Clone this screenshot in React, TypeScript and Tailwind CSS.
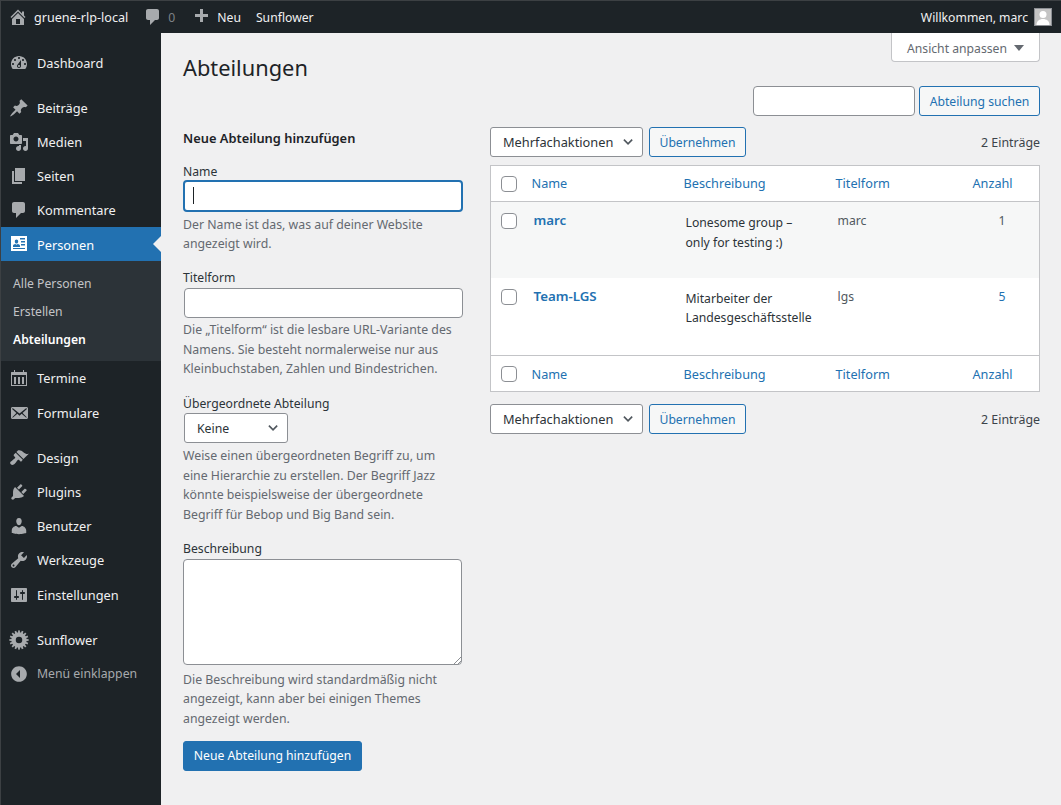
import React from "react";

const font = "font-['Noto_Sans','Open_Sans',sans-serif]";

const icons: Record<string, string> = {
    home: "M16 8.5l1.53 1.53-1.06 1.06L10 4.62l-6.47 6.47-1.06-1.06L10 2.5l4 4v-2h2v4zm-6-2.46l6 5.99V18H4v-5.97zM12 17v-5H8v5h4z",
    comment: "M5 2h9c1.1 0 2 .9 2 2v7c0 1.1-.9 2-2 2h-2l-5 5v-5H5c-1.1 0-2-.9-2-2V4c0-1.1.9-2 2-2z",
    plus: "M17 7v3h-5v5H9v-5H4V7h5V2h3v5h5z",
    dashboard: "M3.76 16h12.48c1.1-1.37 1.76-3.11 1.76-5 0-4.42-3.58-8-8-8s-8 3.58-8 8c0 1.89.66 3.63 1.76 5zM10 4c.55 0 1 .45 1 1s-.45 1-1 1-1-.45-1-1 .45-1 1-1zM6 6c.55 0 1 .45 1 1s-.45 1-1 1-1-.45-1-1 .45-1 1-1zm8 0c.55 0 1 .45 1 1s-.45 1-1 1-1-.45-1-1 .45-1 1-1zm-5.37 5.55L12 7v6c0 1.1-.9 2-2 2s-2-.9-2-2c0-.57.24-1.08.63-1.45zM4 10c.55 0 1 .45 1 1s-.45 1-1 1-1-.45-1-1 .45-1 1-1zm12 0c.55 0 1 .45 1 1s-.45 1-1 1-1-.45-1-1 .45-1 1-1zm-5 3c0-.55-.45-1-1-1s-1 .45-1 1 .45 1 1 1 1-.45 1-1z",
    post: "M10.44 3.02l1.82-1.82 6.36 6.35-1.83 1.82c-1.05-.68-2.48-.57-3.41.36l-.75.75c-.92.93-1.04 2.35-.35 3.41l-1.83 1.82-2.41-2.41-2.8 2.79c-.42.42-3.38 2.71-3.8 2.29s1.86-3.39 2.28-3.81l2.79-2.79L4.1 9.36l1.83-1.82c1.05.69 2.48.57 3.4-.36l.75-.75c.93-.92 1.05-2.35.36-3.41z",
    media: "M13 11V4c0-.55-.45-1-1-1h-1.67L9 1H5L3.67 3H2c-.55 0-1 .45-1 1v7c0 .55.45 1 1 1h10c.55 0 1-.45 1-1zM7 4.5c1.38 0 2.5 1.12 2.5 2.5S8.38 9.5 7 9.5 4.5 8.38 4.5 7 5.62 4.5 7 4.5zM14 6h5v10.5c0 1.38-1.12 2.5-2.5 2.5S14 17.88 14 16.5s1.12-2.5 2.5-2.5c.17 0 .34.02.5.05V9h-3V6zm-4 8.05V13h2v3.5c0 1.38-1.12 2.5-2.5 2.5S7 17.88 7 16.5 8.12 14 9.5 14c.17 0 .34.02.5.05z",
    page: "M6 15V2h10v13H6zm-1 1h8v2H3V5h2v11z",
    personen: "M2 2h16v15H2V2zm5.5 3.6c-1 0-1.7.8-1.7 1.8S6.5 9.5 7.5 9.5 9.2 8.4 9.2 7.4 8.5 5.6 7.5 5.6zM4 13h7v-1.2c0-.9-1.2-1.9-2.3-1.9l-1.2.9-1.2-.9C5.2 9.9 4 10.9 4 11.8V13zm7-9v1.5h5V4h-5zm1 3v1.5h4V7h-4zm0 3v1.5h4V10h-4zM4 14v1h12v-1H4z",
    calendar: "M15 4h2.5c.3 0 .5.2.5.5V18H2V4.5c0-.3.2-.5.5-.5H5V2h1v2h8V2h1v2zM3 7v10h14V7H3zm2 2h2v7H5V9zm4 0h2v7H9V9zm4 0h2v7h-2V9z",
    mail: "M19 14.5v-9c0-.83-.67-1.5-1.5-1.5H3.49c-.83 0-1.5.67-1.5 1.5v9c0 .83.67 1.5 1.5 1.5H17.5c.83 0 1.5-.67 1.5-1.5zm-1.31-9.11c.33.33.15.67-.03.84L13.6 9.95l3.9 4.06c.12.14.2.36.06.51-.13.16-.43.15-.56.05l-4.37-3.73-2.14 1.95-2.13-1.95-4.37 3.73c-.13.1-.43.11-.56-.05-.14-.15-.06-.37.06-.51l3.9-4.06-4.06-3.72c-.18-.17-.36-.51-.03-.84s.67-.17.95.07l6.24 5.04 6.25-5.04c.28-.24.62-.4.95-.07z",
    design: "M14.48 11.06L7.41 3.99l1.5-1.5c.5-.56 2.3-.47 3.51.32 1.21.8 1.43 1.28 2.91 2.1 1.18.64 2.45 1.26 4.45.85zm-.71.71L6.7 4.7 4.93 6.47c-.39.39-.39 1.02 0 1.41l1.06 1.06c.39.39.39 1.03 0 1.42-.6.6-1.43 1.11-2.21 1.69-.35.26-.7.53-1.01.84C1.43 13.23.4 14.89 1.8 16.3c1.4 1.4 3.07.37 4.41-.97.31-.31.58-.67.84-1.01.58-.78 1.09-1.61 1.69-2.21.39-.39 1.03-.39 1.42 0l1.06 1.06c.39.39 1.02.39 1.41 0z",
    plugin: "M13.11 4.36L9.87 7.6 8 5.73l3.24-3.24c.35-.34 1.05-.2 1.56.32.52.51.66 1.21.31 1.55zm-8 1.77l.91-1.12 9.01 9.01-1.19.84c-.71.71-2.63 1.16-3.82 1.16H6.14L4.9 17.26c-.59.59-1.54.59-2.12 0-.59-.58-.59-1.53 0-2.12l1.24-1.24v-3.88c0-1.13.4-3.19 1.09-3.89zm7.26 3.97l3.24-3.24c.34-.35 1.04-.21 1.55.31.52.51.66 1.21.31 1.55l-3.24 3.25z",
    users: "M10 9.25c-2.27 0-2.73-3.44-2.73-3.44C7 4.02 7.82 2 9.97 2c2.16 0 2.98 2.02 2.71 3.81 0 0-.41 3.44-2.68 3.44zm0 2.57L12.72 10c2.39 0 4.52 2.33 4.52 4.53v2.49s-3.65 1.13-7.24 1.13c-3.65 0-7.24-1.13-7.24-1.13v-2.49c0-2.25 1.94-4.48 4.47-4.48z",
    tools: "M16.68 9.77c-1.34 1.34-3.3 1.67-4.95.99l-5.41 6.52c-.99.99-2.59.99-3.58 0s-.99-2.59 0-3.57l6.52-5.42c-.68-1.65-.35-3.61.99-4.95 1.28-1.28 3.12-1.62 4.72-1.06l-2.89 2.89 2.82 2.82 2.86-2.87c.53 1.58.18 3.39-1.08 4.65zM3.81 16.21c.4.39 1.04.39 1.43 0 .4-.4.4-1.04 0-1.43-.39-.4-1.03-.4-1.43 0-.39.39-.39 1.03 0 1.43z",
    settings: "M18 16V4c0-.55-.45-1-1-1H3c-.55 0-1 .45-1 1v12c0 .55.45 1 1 1h14c.55 0 1-.45 1-1zM8 11h1c.55 0 1 .45 1 1s-.45 1-1 1H8v1.5c0 .28-.22.5-.5.5s-.5-.22-.5-.5V13H6c-.55 0-1-.45-1-1s.45-1 1-1h1V5.5c0-.28.22-.5.5-.5s.5.22.5.5V11zm5-2h-1c-.55 0-1-.45-1-1s.45-1 1-1h1V5.5c0-.28.22-.5.5-.5s.5.22.5.5V7h1c.55 0 1 .45 1 1s-.45 1-1 1h-1v5.5c0 .28-.22.5-.5.5s-.5-.22-.5-.5V9z",
    collapse: "M10 2.16c4.33 0 7.84 3.51 7.84 7.84s-3.51 7.84-7.84 7.84S2.16 14.33 2.16 10C2.17 5.67 5.67 2.16 10 2.16zM11 6v8L7 10z",
};

const Icon = ({ name, className }: { name: string; className: string }) => (
    <svg viewBox="0 0 20 20" fill="currentColor" fillRule="evenodd" className={className}>
        <path d={icons[name]} />
    </svg>
);

const SunIcon = () => (
    <svg viewBox="0 0 20 20" fill="currentColor" className="w-5 h-5 text-[#a7aaad]">
        <circle cx="10" cy="10" r="5.5" fill="none" stroke="currentColor" strokeWidth="4.5" />
        {Array.from({ length: 16 }).map((_, i) => (
            <rect key={i} x="9.1" y="0.4" width="1.8" height="3" transform={`rotate(${i * 22.5} 10 10)`} />
        ))}
    </svg>
);

const MenuItem = ({ icon, label, h = "h-[34px]", mt = "" }: { icon: string; label: string; h?: string; mt?: string }) => (
    <div className={`flex items-center ${h} ${mt} text-[#f0f0f1] text-[12.8px]`}>
        <span className="w-[36px] pl-[8px] flex items-center shrink-0">
            <Icon name={icon} className="w-5 h-5 text-[#a7aaad]" />
        </span>
        <span className="pt-[2px]">{label}</span>
    </div>
);

const SmallBtn = ({ label, className = "" }: { label: string; className?: string }) => (
    <button className={`h-[30px] pt-[2px] rounded-[3px] border border-[#2271b1] bg-[#f6f7f7] text-[#2271b1] text-[12.2px] ${className}`}>
        {label}
    </button>
);

const Chevron = () => (
    <svg viewBox="0 0 12 8" className="w-[11px] h-[8px]" fill="none" stroke="#50575e" strokeWidth="1.8">
        <path d="M1 1.5l4.5 4.5 4.5-4.5" />
    </svg>
);

const BulkActions = ({ className = "" }: { className?: string }) => (
    <div className={`flex items-center justify-between ${className}`}>
        <div className="flex items-center gap-[6px]">
            <div className="w-[153px] h-[30px] bg-white border border-[#8c8f94] rounded-[3px] flex items-center justify-between pl-[12px] pr-[8px] text-[#2c3338] text-[12.8px]">
                <span className="pt-[2px]">Mehrfachaktionen</span>
                <Chevron />
            </div>
            <SmallBtn label="Übernehmen" className="w-[97px]" />
        </div>
        <span className="pt-[2px] text-[#3c434a] text-[12.4px]">2 Einträge</span>
    </div>
);

const Checkbox = () => (
    <span className="block w-4 h-4 bg-white border border-[#8c8f94] rounded-[4px]" />
);

const HeadRow = ({ top }: { top?: boolean }) => {
    const cell = `pl-[8px] ${top ? "pt-px" : "pt-[2px]"}`;
    return (
        <tr className={`h-[36px] text-[#2271b1] text-[12.7px] ${top ? "border-b" : "border-t"} border-[#c3c4c7]`}>
            <td className="pl-[10px]"><Checkbox /></td>
            <td className={cell}>Name</td>
            <td className={cell}>Beschreibung</td>
            <td className={cell}>Titelform</td>
            <td className={cell}>Anzahl</td>
        </tr>
    );
};

const Row = ({ name, desc, slug, count, h, shaded, countLink }: { name: string; desc: string[]; slug: string; count: string; h: string; shaded?: boolean; countLink?: boolean }) => (
    <tr className={`${h} align-top text-[12.2px] ${shaded ? "bg-[#f6f7f7]" : "bg-white"}`}>
        <td className="pl-[10px] pt-[11px]"><Checkbox /></td>
        <td className="pl-[10px] pt-[9px] font-semibold text-[#2271b1] text-[13.3px]">{name}</td>
        <td className="pl-[10px] pt-[11px] text-[#2c3338] leading-[19.5px]">
            {desc.map((d) => (
                <div key={d}>{d}</div>
            ))}
        </td>
        <td className="pl-[10px] pt-[10px] text-[#50575e]">{slug}</td>
        <td className={`pt-[10px] pl-[34px] ${countLink ? "text-[#2271b1]" : "text-[#50575e]"}`}>{count}</td>
    </tr>
);

const Help = ({ lines, className = "" }: { lines: string[]; className?: string }) => (
    <div className={`text-[#646970] text-[12.3px] leading-[19.5px] whitespace-nowrap ${className}`}>
        {lines.map((l) => (
            <div key={l}>{l}</div>
        ))}
    </div>
);

const Label = ({ children, className = "" }: { children: React.ReactNode; className?: string }) => (
    <div className={`text-[#2c3338] text-[12.2px] leading-[19.5px] ${className}`}>{children}</div>
);

const AddForm = () => (
    <div className="w-[280px] flex flex-col">
        <h2 className="text-[#1d2327] text-[12.85px] font-semibold leading-[20px] mt-px">Neue Abteilung hinzufügen</h2>
        <Label className="mt-[14px]">Name</Label>
        <div className="-mt-[2px] w-[280px] h-[32px] bg-white border-2 border-[#2271b1] rounded-[4px] flex items-center pl-[8px]">
            <span className="block w-px h-[17px] bg-[#1d2327]" />
        </div>
        <Help className="mt-[3px]" lines={["Der Name ist das, was auf deiner Website", "angezeigt wird."]} />
        <Label className="mt-[14px]">Titelform</Label>
        <div className="ml-px mt-px w-[279px] h-[30px] bg-white border border-[#8c8f94] rounded-[4px]" />
        <Help className="mt-[2px]" lines={["Die „Titelform“ ist die lesbare URL-Variante des", "Namens. Sie besteht normalerweise nur aus", "Kleinbuchstaben, Zahlen und Bindestrichen."]} />
        <Label className="mt-[15px]">Übergeordnete Abteilung</Label>
        <div className="ml-px w-[104px] h-[30px] bg-white border border-[#8c8f94] rounded-[3px] flex items-center justify-between pl-[12px] pr-[8px] text-[#2c3338] text-[12.3px]">
            <span className="pt-[2px]">Keine</span>
            <Chevron />
        </div>
        <Help className="mt-[3px]" lines={["Weise einen übergeordneten Begriff zu, um", "eine Hierarchie zu erstellen. Der Begriff Jazz", "könnte beispielsweise der übergeordnete", "Begriff für Bebop und Big Band sein."]} />
        <Label className="mt-[15px]">Beschreibung</Label>
        <div className="relative mt-[0.5px] w-[279px] h-[106px] bg-white border border-[#8c8f94] rounded-[4px]">
            <svg viewBox="0 0 8 8" className="absolute right-0 bottom-0 w-2 h-2" stroke="#8c8f94" strokeWidth="1">
                <path d="M1 8l7-7M5 8l3-3" />
            </svg>
        </div>
        <Help className="mt-[4.5px]" lines={["Die Beschreibung wird standardmäßig nicht", "angezeigt, kann aber bei einigen Themes", "angezeigt werden."]} />
        <button className="mt-[13px] w-[179px] h-[30px] pt-[1px] rounded-[3px] bg-[#2271b1] border border-[#2271b1] text-white text-[12.2px]">
            Neue Abteilung hinzufügen
        </button>
    </div>
);

const TermsTable = () => (
    <div className="flex-1 min-w-0">
        <BulkActions />
        <table className="mt-[8px] w-full table-fixed border-collapse bg-white border border-[#c3c4c7]">
            <colgroup>
                <col className="w-[33px]" />
                <col className="w-[152px]" />
                <col className="w-[152px]" />
                <col className="w-[137px]" />
                <col />
            </colgroup>
            <thead>
                <HeadRow top />
            </thead>
            <tbody>
                <Row shaded h="h-[76px]" name="marc" desc={["Lonesome group –", "only for testing :)"]} slug="marc" count="1" />
                <Row h="h-[78px]" name="Team-LGS" desc={["Mitarbeiter der", "Landesgeschäftsstelle"]} slug="lgs" count="5" countLink />
            </tbody>
            <tfoot>
                <HeadRow />
            </tfoot>
        </table>
        <BulkActions className="mt-[12px]" />
    </div>
);

const AdminBar = () => (
    <header className="h-[32px] bg-[#1d2327] flex items-center justify-between text-[#f0f0f1] text-[12.2px] shrink-0">
        <div className="flex items-center">
            <Icon name="home" className="w-5 h-5 ml-[7px] text-[#a7aaad]" />
            <span className="ml-[6px] pt-[2px] text-[12.6px]">gruene-rlp-local</span>
            <Icon name="comment" className="w-5 h-5 ml-[15px] text-[#a7aaad]" />
            <span className="ml-[5px] pt-[2px] text-[#7e8287]">0</span>
            <Icon name="plus" className="w-5 h-5 ml-[16px] text-[#a7aaad]" />
            <span className="ml-[6px] pt-[2px]">Neu</span>
            <span className="ml-[15px] pt-[2px]">Sunflower</span>
        </div>
        <div className="flex items-center pr-[9px]">
            <span className="pt-[2px]">Willkommen, marc</span>
            <span className="ml-[6px] w-[18px] h-[18px] bg-[#c4c4c4] border border-[#8c8f94] overflow-hidden flex items-end justify-center">
                <svg viewBox="0 0 16 16" className="w-4 h-4" fill="#fff">
                    <circle cx="8" cy="5.5" r="3.5" />
                    <path d="M1.5 16c0-4 3-6 6.5-6s6.5 2 6.5 6z" />
                </svg>
            </span>
        </div>
    </header>
);

const Sidebar = () => (
    <aside className="w-[160px] shrink-0 bg-[#1d2327] pt-[13px]">
        <MenuItem icon="dashboard" label="Dashboard" />
        <MenuItem icon="post" label="Beiträge" mt="mt-[11px]" />
        <MenuItem icon="media" label="Medien" />
        <MenuItem icon="page" label="Seiten" />
        <MenuItem icon="comment" label="Kommentare" />
        <div className="relative bg-[#2271b1] flex items-center h-[34px] text-white text-[12.8px]">
            <span className="w-[36px] pl-[8px] flex items-center shrink-0">
                <Icon name="personen" className="w-5 h-5 text-white" />
            </span>
            <span className="pt-[4px]">Personen</span>
            <span className="absolute right-0 top-[9px] border-y-[8px] border-y-transparent border-r-[8px] border-r-[#f0f0f1]" />
        </div>
        <div className="bg-[#2c3338] h-[100px] pt-[9px] text-[12.2px]">
            <div className="h-[28px] pl-[12px] flex items-center text-[#c3c4c7]">Alle Personen</div>
            <div className="h-[28px] pl-[12px] flex items-center text-[#c3c4c7]">Erstellen</div>
            <div className="h-[28px] pl-[12px] flex items-center text-white font-semibold">Abteilungen</div>
        </div>
        <MenuItem icon="calendar" label="Termine" />
        <MenuItem icon="mail" label="Formulare" h="h-[35px]" />
        <MenuItem icon="design" label="Design" mt="mt-[11px]" />
        <MenuItem icon="plugin" label="Plugins" />
        <MenuItem icon="users" label="Benutzer" />
        <MenuItem icon="tools" label="Werkzeuge" />
        <MenuItem icon="settings" label="Einstellungen" h="h-[35px]" />
        <div className="mt-[11px] flex items-center h-[34px] text-[#f0f0f1] text-[12.8px]">
            <span className="w-[36px] pl-[8px] flex items-center shrink-0"><SunIcon /></span>
            <span className="pt-[2px]">Sunflower</span>
        </div>
        <div className="flex items-center h-[33px] text-[#a7aaad] text-[12.25px]">
            <span className="w-[36px] pl-[8px] flex items-center shrink-0">
                <Icon name="collapse" className="w-5 h-5 text-[#a7aaad]" />
            </span>
            <span className="pt-[2px]">Menü einklappen</span>
        </div>
    </aside>
);

export default function App() {
    return (
        <div className={`${font} w-[1061px] h-[805px] overflow-hidden flex flex-col bg-[#f0f0f1] border-l border-t border-[#3c4043]`}>
            <AdminBar />
            <div className="flex flex-1 min-h-0">
                <Sidebar />
                <main className="flex-1 min-w-0 pl-[22px] pr-[21px]">
                    <div className="flex justify-end">
                        <div className="w-[149px] h-[29px] pt-[2px] bg-white border border-t-0 border-[#c3c4c7] rounded-b-[4px] flex items-center justify-center gap-[7px] text-[#646970] text-[12.2px]">
                            <span className="pt-[2px]">Ansicht anpassen</span>
                            <span className="border-x-[5px] border-x-transparent border-t-[6px] border-t-[#646970]" />
                        </div>
                    </div>
                    <h1 className="text-[21.8px] leading-[30px] text-[#1d2327] -mt-[9px]">Abteilungen</h1>
                    <div className="flex justify-end gap-[4px] mt-[3px]">
                        <div className="w-[162px] h-[30px] bg-white border border-[#8c8f94] rounded-[4px]" />
                        <SmallBtn label="Abteilung suchen" className="w-[121px]" />
                    </div>
                    <div className="flex gap-[27px] mt-[11px]">
                        <AddForm />
                        <TermsTable />
                    </div>
                </main>
            </div>
        </div>
    );
}
